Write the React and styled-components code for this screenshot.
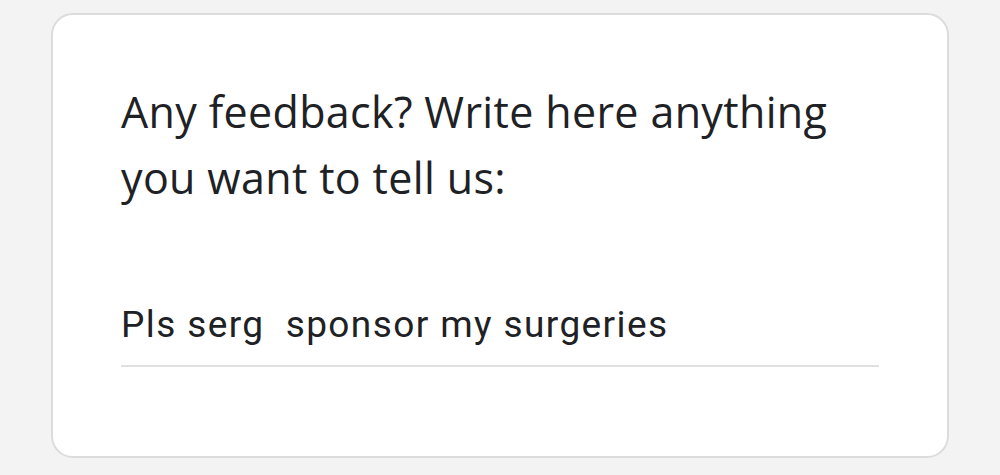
import styled, { createGlobalStyle } from 'styled-components'

const Global = createGlobalStyle`
	html, body {
		margin: 0;
		background: #f3f3f3;
	}
`

function App() {
	return (
		<Page>
			<Global />
			<Card>
				<Question>Any feedback? Write here anything you want to tell us:</Question>
				<Answer>Pls serg&nbsp; sponsor my surgeries</Answer>
			</Card>
		</Page>
	)
}

export default App

const Page = styled.div`
	width: 1000px;
	height: 475px;
	box-sizing: border-box;
	padding: 13px 51px 0 51px;
`

const Card = styled.div`
	box-sizing: border-box;
	height: 445px;
	background: #fff;
	border: 2px solid #dcdcdc;
	border-radius: 22px;
	padding: 64px 68px 0 68px;
	display: flex;
	flex-direction: column;
`

const Question = styled.div`
	font-family: 'Open Sans', sans-serif;
	font-size: 43px;
	letter-spacing: 0.35px;
	line-height: 66px;
	color: #202124;
	width: 730px;
`

const Answer = styled.div`
	margin-top: 90px;
	font-family: Roboto, sans-serif;
	font-size: 37px;
	letter-spacing: 1.4px;
	line-height: 48px;
	color: #202124;
	padding-bottom: 16px;
	border-bottom: 2px solid #e0e0e0;
`
